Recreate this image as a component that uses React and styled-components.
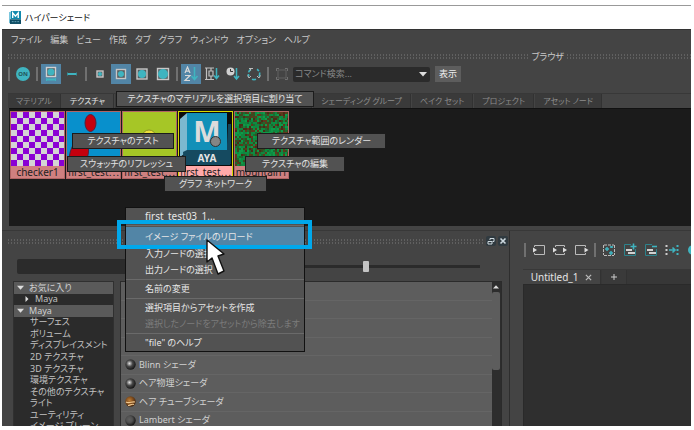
import React from "react";
import styled, { createGlobalStyle, css } from "styled-components";

const GlobalStyle = createGlobalStyle`
  * { box-sizing: border-box; }
  html, body { margin: 0; padding: 0; background: #fff; }
  body, button, input {
    font-family: "Noto Sans", "Noto Sans CJK JP", sans-serif;
    font-size: 9px;
    line-height: 12px;
    font-feature-settings: "palt";
  }
  button { padding: 0; border: 0; background: none; color: inherit; white-space: nowrap; }
  ul { list-style: none; margin: 0; padding: 0; }
  svg { display: block; }
`;

const teal = "#3fb4c0";
const blue = "#5285a6";

const Page = styled.div`
  height: 100vh;
  padding: 5px 3px 4px 2px;
`;

const Window = styled.div`
  position: relative;
  height: 100%;
  display: flex;
  flex-direction: column;
  overflow: hidden;
  background: #444;
  color: #c8c8c8;
  border-top: 1px solid #999;
`;

const TitleBar = styled.header`
  flex: none;
  height: 23px;
  display: flex;
  align-items: center;
  gap: 4px;
  padding-left: 7px;
  background: #fff;
  color: #111;
`;

const MenuBar = styled.nav`
  flex: none;
  height: 21px;
  display: flex;
  align-items: center;
  gap: 8px;
  padding-left: 9px;
  border-top: 1px solid #333;
`;

const GripRow = styled.div`
  flex: none;
  height: 13px;
  display: grid;
  grid-template-columns: 21fr auto 5fr;
  align-items: center;
  gap: 3px;
  padding-left: 6px;
`;

const Dots = styled.div`
  flex: 1;
  height: 5px;
  background:
    linear-gradient(#444, #444) 0 2px / 100% 1px no-repeat,
    repeating-linear-gradient(90deg, #606060 0 1px, #444 1px 3px);
`;

const Toolbar = styled.div`
  flex: none;
  height: 22px;
  display: flex;
  align-items: center;
  gap: 1px;
  padding-left: 4px;
`;

const Sep = styled.span`
  flex: none;
  width: 2px;
  height: 14px;
  margin: 0 2px;
  background: #707070;
`;

const ToolButton = styled.button`
  flex: none;
  width: 20px;
  height: 20px;
  display: grid;
  place-items: center;
  background: ${(p) => (p.$on ? blue : "transparent")};
`;

const SearchBox = styled.div`
  width: 137px;
  height: 15px;
  display: flex;
  align-items: center;
  padding: 0 3px 0 2px;
  margin-right: 4px;
  background: #2b2b2b;
  border-radius: 2px;
`;

const SearchInput = styled.input`
  flex: 1;
  min-width: 0;
  padding: 0;
  border: 0;
  background: transparent;
  color: #ccc;
  &::placeholder { color: #868686; }
`;

const PushButton = styled.button`
  width: 26px;
  height: 16px;
  background: #5d5d5d;
  color: #eee;
`;

const TabRow = styled.div`
  flex: none;
  display: flex;
  gap: 1px;
  margin-top: ${(p) => p.$top}px;
  margin-left: ${(p) => p.$left}px;
  border-top: 1px solid #383838;
  background: ${(p) => (p.$strip ? "#373737" : "transparent")};
`;

const Tab = styled.button`
  height: 14px;
  padding: 0 8px;
  display: flex;
  align-items: center;
  gap: 6px;
  font-size: ${(p) => (p.$latin ? 10 : 8)}px;
  background: ${(p) => (p.$on ? "#444" : "#3a3a3a")};
  color: ${(p) => (p.$on ? "#e4e4e4" : "#8c8c8c")};
  border-right: 1px solid #323232;
  ${(p) => p.$wide && css`width: 197px;`}
`;

const Gallery = styled.ul`
  flex: none;
  height: 118px;
  display: flex;
  gap: 1px;
  margin-left: 7px;
  padding: 2px 1px;
  background: #1b1b1b;
  border-top: 1px solid #111;
`;

const Swatch = styled.li`
  width: 55px;
  height: 68px;
  display: flex;
  flex-direction: column;
  border: 1px solid ${(p) => (p.$on ? "#d8d800" : "#b06464")};
  background: ${(p) => (p.$on ? "#ffa9a9" : "#cf8080")};
  color: #222;
`;

const SwatchLabel = styled.span`
  height: 12px;
  font-size: 10px;
  text-align: center;
  white-space: nowrap;
  overflow: hidden;
`;

const Checker = styled.div`
  height: 54px;
  background: conic-gradient(#d4d4d4 25%, #8a00d4 0 50%, #d4d4d4 0 75%, #8a00d4 0) 0 0 / 12px 12px;
`;

const Lower = styled.div`
  flex: 1;
  min-height: 0;
  display: grid;
  grid-template-columns: 14fr 5fr;
  margin-top: 4px;
  border-top: 1px solid #383838;
`;

const CreatePane = styled.section`
  min-width: 0;
  min-height: 0;
  display: flex;
  flex-direction: column;
  padding: 0 1px 0 6px;
  border-right: 1px solid #2e2e2e;
`;

const PaneHeader = styled.div`
  flex: none;
  height: 20px;
  display: flex;
  align-items: center;
  gap: 2px;
`;

const PaneButton = styled.button`
  width: 10px;
  height: 10px;
  display: grid;
  place-items: center;
  background: #303a40;
  border-radius: 2px;
`;

const FilterRow = styled.div`
  flex: none;
  display: flex;
  align-items: center;
  gap: 8px;
  height: 15px;
  margin: 8px 28px 7px 9px;
`;

const FilterInput = styled.input`
  flex: 1;
  min-width: 0;
  height: 15px;
  border: 0;
  border-radius: 2px;
  background: #2b2b2b;
  color: #ccc;
`;

const Slider = styled.input`
  appearance: none;
  flex: none;
  width: 50%;
  height: 12px;
  margin: 0;
  background: linear-gradient(#2b2b2b, #2b2b2b) 0 50% / 100% 3px no-repeat;
  &::-webkit-slider-thumb {
    appearance: none;
    width: 6px;
    height: 11px;
    border-radius: 1px;
    background: #c4c4c4;
  }
`;

const Columns = styled.div`
  flex: 1;
  min-height: 0;
  display: grid;
  grid-template-columns: 101px 1fr;
  gap: 6px;
  padding: 0 6px 0 5px;
`;

const Tree = styled.ul`
  min-height: 0;
  overflow: hidden;
  background: #2b2b2b;
  border: 1px solid #303030;
  border-bottom: 0;
  height: 100%;
`;

const TreeRows = styled.div`
  height: 150px;
  display: grid;
  grid-template-rows: repeat(13, 1fr);
`;

const TreeItem = styled.li`
  display: flex;
  align-items: center;
  gap: 5px;
  min-height: 0;
  padding-left: ${(p) => (p.$kind === "child" ? 10 : p.$kind === "head" ? 3 : 16)}px;
  background: ${(p) => (p.$kind === "head" ? "#5a5a5a" : "transparent")};
  color: ${(p) => (p.$kind === "head" ? "#d0d0d0" : "#c2c2c2")};
  white-space: nowrap;
`;

const ListFrame = styled.div`
  min-width: 0;
  min-height: 0;
  display: flex;
  overflow: hidden;
  background: #5d5d5d;
  border: solid #2b2b2b;
  border-width: 1px 1px 0 1px;
`;

const NodeRows = styled.ul`
  flex: 1;
  height: 148px;
  display: grid;
  grid-template-rows: repeat(8, 1fr);
`;

const NodeRow = styled.li`
  display: flex;
  align-items: center;
  gap: 3px;
  min-height: 0;
  padding-left: 4px;
  border-bottom: 1px solid #656565;
  color: #d0d0d0;
`;

const ScrollTrack = styled.div`
  width: 9px;
  display: flex;
  flex-direction: column;
  align-items: center;
  gap: 2px;
  padding-top: 2px;
  background: #2d2d2d;
`;

const ScrollThumb = styled.div`
  width: 8px;
  height: 78px;
  border-radius: 2px;
  background: #5d5d5d;
`;

const WorkPane = styled.section`
  min-width: 0;
  display: flex;
  flex-direction: column;
  overflow: hidden;
  padding: 8px 0 0 11px;
`;

const Canvas = styled.div`
  flex: 1;
  margin-left: 2px;
  background: #2f2f2f;
  border: solid #2a2a2a;
  border-width: 1px 0 0 1px;
`;

const RadialItem = styled.button`
  position: absolute;
  left: ${(p) => p.$x}px;
  top: ${(p) => p.$y}px;
  width: ${(p) => p.$w}px;
  height: 16px;
  background: #525252;
  border: 1px solid #1c1c1c;
  color: #e2e2e2;
`;

const RadialCenter = styled.span`
  position: absolute;
  left: 208px;
  top: 130px;
  width: 11px;
  height: 11px;
  border-radius: 50%;
  background: #858585;
  border: 1px solid #333;
`;

const ContextMenu = styled.div`
  position: absolute;
  left: 123px;
  top: 201px;
  width: 180px;
  display: flex;
  flex-direction: column;
  background: #525252;
  border: 1px solid #111;
`;

const MenuItem = styled.button`
  height: ${(p) => (p.$on ? 19 : 16)}px;
  padding-left: 19px;
  text-align: left;
  font-size: ${(p) => (p.$latin ? 10 : 9)}px;
  background: ${(p) => (p.$on ? blue : "transparent")};
  color: ${(p) => (p.disabled ? "#7c7c7c" : "#e6e6e6")};
`;

const MenuRule = styled.span`
  height: 1px;
  margin: 1px 0;
  background: #6a6a6a;
`;

const Highlight = styled.div`
  position: absolute;
  left: 115px;
  top: 214px;
  width: 195px;
  height: 29px;
  border: 4px solid #00a8ec;
`;

const Pointer = styled.svg`
  position: absolute;
  left: 203px;
  top: 233px;
`;

const Glyph = ({ children, size = 16 }) => (
  <svg width={size} height={size} viewBox={`0 0 ${size} ${size}`} fill="none" aria-hidden="true">
    {children}
  </svg>
);

const Preview = ({ box, r }) => (
  <Glyph>
    <rect x={8 - box / 2} y={8 - box / 2} width={box} height={box} fill="#565c5e" stroke="#c6c6c6" strokeWidth="1.400" />
    <circle cx="8" cy="8" r={r} fill={teal} />
  </Glyph>
);

const icons = {
  on: (
    <Glyph>
      <circle cx="8" cy="8" r="7" fill={teal} />
      <text x="8" y="10" textAnchor="middle" fontSize="6" fontWeight="700" fill="#22545a">ON</text>
    </Glyph>
  ),
  base: (
    <Glyph>
      <rect x="3.500" y="1.500" width="9" height="9" fill="#5a6265" stroke="#d0d0d0" strokeWidth="1.400" />
      <circle cx="8" cy="6" r="3.500" fill={teal} />
      <path d="M3.500 12v3M12.500 12v3" stroke={teal} />
      <path d="M4 13.500h8" stroke={teal} strokeWidth="2" />
    </Glyph>
  ),
  dash: (
    <Glyph>
      <path d="M3 8h10" stroke={teal} strokeWidth="2" />
      <path d="M3.500 6.500v3M12.500 6.500v3" stroke="#348e98" />
    </Glyph>
  ),
  az: (
    <Glyph>
      <path d="M2 7 4.500 1 7 7M3 5.200h3M2 9.500h5L2 14.500h5" stroke="#d8d8d8" strokeWidth="1.200" />
      <path d="M11.500 1v12M8.500 10l3 3.500 3-3.500" stroke={teal} strokeWidth="1.600" />
    </Glyph>
  ),
  type: (
    <Glyph>
      <path d="M1 2h9M1 13.500h9M2.500 2v11.500M5 5h4v5H5zM7 2v3M7 10v3.500" stroke="#c0c0c0" strokeWidth="1.200" />
      <path d="M12.500 2v10M10 9.500l2.500 3 2.500-3" stroke={teal} strokeWidth="1.500" />
    </Glyph>
  ),
  time: (
    <Glyph>
      <circle cx="5.500" cy="5.500" r="4" fill="#d0d0d0" />
      <path d="M5.500 3v2.500h2.500" stroke="#333" />
      <path d="M11.500 2v11M9 10l2.500 3 2.500-3" stroke={teal} strokeWidth="1.500" />
    </Glyph>
  ),
  cycle: (
    <Glyph>
      <path d="M5 3.200A5.500 5.500 0 0 0 3 10.500M6 13.200a5.500 5.500 0 0 0 4 0M13 10.500A5.500 5.500 0 0 0 11 3.200" stroke={teal} strokeWidth="1.600" strokeDasharray="4 1.500" />
      <path d="M3 2.500h4M4.500 2v2.500M1.500 9.500l1.500 2.500 2-2M14.500 9.500 13 12l-2-2" stroke="#bbb" />
    </Glyph>
  ),
  frame: (
    <Glyph>
      <path d="M4 4h8v8H4z" stroke="#606060" />
      <path d="M2.500 5V2.500H5M11 2.500h2.500V5M13.500 11v2.500H11M5 13.500H2.500V11" stroke="#707070" />
    </Glyph>
  ),
  input: (
    <Glyph>
      <path d="M3.500 5V3.500h10v9h-10V11" stroke="#bbb" />
      <path d="M2 5.500 6 8l-4 2.500z" fill="#ddd" />
    </Glyph>
  ),
  both: (
    <Glyph>
      <path d="M3.500 5V3.500h9V5M3.500 11v1.500h9V11" stroke="#bbb" />
      <path d="M1 5.500 5 8l-4 2.500zM11 5.500 15 8l-4 2.500z" fill="#ddd" />
    </Glyph>
  ),
  output: (
    <Glyph>
      <path d="M12.500 5V3.500h-10v9h10V11" stroke="#bbb" />
      <path d="M11.500 5.500 15.500 8l-4 2.500z" fill="#ddd" />
    </Glyph>
  ),
  graph: (
    <Glyph>
      <path d="M3 3h10M3 13.500h10M2.500 3v10M13.500 3v10" stroke="#bbb" strokeDasharray="3 1" />
      <path d="M4 7h4M6 5v4M9 5h3M10.500 4v2M8 11h4M10 9v4" stroke={teal} strokeWidth="1.500" />
    </Glyph>
  ),
  add: (
    <Glyph>
      <path d="M9 2.500H2.500v11h11V7" stroke="#2d838c" />
      <path d="M8.500 4.500h6M11.500 1.500v6" stroke={teal} strokeWidth="1.600" />
      <path d="M4 8h6M6 11h7" stroke="#d0d0d0" strokeWidth="2" />
    </Glyph>
  ),
  remove: (
    <Glyph>
      <path d="M9 2.500H2.500v11h11V7" stroke="#2d838c" />
      <path d="M9 4.500h5" stroke={teal} strokeWidth="1.600" />
      <path d="M4 8h6M6 11h7" stroke="#d0d0d0" strokeWidth="2" />
    </Glyph>
  ),
  arrange: (
    <Glyph>
      <path d="M5 8h6M8.500 5.500 11 8l-2.500 2.500" stroke={teal} strokeWidth="1.600" />
      <path d="M2.500 3v10" stroke="#ccc" strokeWidth="2" strokeDasharray="2 2" />
      <path d="M13.500 3v10" stroke={teal} strokeWidth="2" strokeDasharray="2 2" />
    </Glyph>
  ),
  dot: (
    <Glyph>
      <circle cx="8" cy="8" r="5" fill={teal} />
    </Glyph>
  ),
};

const Caret = ({ dir, size = 7 }) => (
  <svg width={size} height={size} viewBox="0 0 8 8" fill="#ddd" aria-hidden="true">
    <path d={dir === "down" ? "M0 2h8L4 6.500z" : dir === "up" ? "M0 6h8L4 1.500z" : "M2 0v8l4-4z"} />
  </svg>
);

const MayaIcon = () => (
  <svg width="12" height="13" viewBox="0 0 13 14" aria-hidden="true">
    <path d="M0 1h2v12H0z" fill="#7cc7de" />
    <path d="M2 0h11v9H2z" fill="#1189ad" />
    <path d="M1 9h12v5H1z" fill="#0c4b63" />
    <path d="M4 7.500V2l3 3.500L10 2v5.500" stroke="#fff" strokeWidth="1.500" fill="none" />
    <path d="M3 11.500h8" stroke="#6ba5b8" strokeDasharray="2 1" />
  </svg>
);

const MayaSwatch = () => (
  <svg width="53" height="54" viewBox="0 0 53 54">
    <rect width="53" height="54" fill="#0c0c0c" />
    <path d="M1 7 8 1v39l-7 5z" fill="#7cb8cf" />
    <path d="M49 12h3v40h-5z" fill="#12465c" />
    <rect x="8" y="1" width="40" height="38" fill="#1290b8" />
    <path d="M4 40 8 38h43v15H5z" fill="#154a60" />
    <text x="28" y="30" textAnchor="middle" fontFamily="Noto Sans" fontSize="29" fontWeight="700" fill="#dcdcdc">M</text>
    <text x="28" y="50" textAnchor="middle" fontFamily="Noto Sans" fontSize="10" fontWeight="700" fill="#e4e4e4">AYA</text>
  </svg>
);

const RedDots = () => (
  <svg width="53" height="54" viewBox="0 0 53 54">
    <rect width="53" height="54" fill="#0890cc" />
    <ellipse cx="23.500" cy="11" rx="5.500" ry="8.500" fill="#c4000e" stroke="#5a2038" />
    <ellipse cx="12" cy="42" rx="9" ry="15" fill="#c4000e" stroke="#5a2038" transform="rotate(15 12 42)" />
  </svg>
);

const YellowDot = () => (
  <svg width="53" height="54" viewBox="0 0 53 54">
    <rect width="53" height="54" fill="#a6c626" />
    <circle cx="26" cy="25" r="7" fill="#ece03c" stroke="#8c9424" />
  </svg>
);

const mountainColors = ["#0c8c42", "#0f9a48", "#1c6a30", "#3b4a20", "#5e3a1c", "#12843e", "#4a2c18"];
const mountainCells = [];
for (let y = 0; y < 27; y += 1) {
  for (let x = 0; x < 27; x += 1) {
    const n = Math.abs(Math.sin(x * 12.9898 + y * 78.233) * 43758.5453);
    mountainCells.push({ x: x * 2, y: y * 2, fill: mountainColors[Math.floor((n % 1) * 7)] });
  }
}

const Mountain = () => (
  <svg width="53" height="54" viewBox="0 0 53 54" shapeRendering="crispEdges">
    {mountainCells.map((c) => (
      <rect key={`${c.x}-${c.y}`} x={c.x} y={c.y} width="2" height="2" fill={c.fill} />
    ))}
  </svg>
);

const Ball = ({ tone }) => (
  <svg width="11" height="11" viewBox="0 0 11 11" aria-hidden="true">
    <defs>
      <radialGradient id={`ball-${tone}`} cx="0.400" cy="0.400" r="0.600">
        <stop offset="0" stopColor={tone === "hair" ? "#c08038" : tone === "matte" ? "#606060" : "#e0e0e0"} />
        <stop offset="0.500" stopColor={tone === "hair" ? "#8a5420" : tone === "matte" ? "#505050" : "#484848"} />
        <stop offset="1" stopColor={tone === "hair" ? "#4a2a10" : "#181818"} />
      </radialGradient>
    </defs>
    <circle cx="5.500" cy="5.500" r="5.200" fill={`url(#ball-${tone})`} />
    {tone === "hair" && <path d="M1 6c3 2 6-1 9 0M3 9.500c2 0 4-2 6-1" stroke="#f0c890" strokeWidth="1.200" fill="none" />}
  </svg>
);

const menus = ["ファイル", "編集", "ビュー", "作成", "タブ", "グラフ", "ウィンドウ", "オプション", "ヘルプ"];

const tools = [
  "|", ["オン", icons.on], "|", ["アイコンと名前", icons.base, true], ["名前のみ", icons.dash], "|",
  ["極小", <Preview box={6} r={2} />], ["小", <Preview box={9} r={3} />, true],
  ["中", <Preview box={10} r={4} />], ["大", <Preview box={11} r={5} />], "|",
  ["名前順", icons.az, true], ["タイプ順", icons.type], ["時間順", icons.time], ["逆順", icons.cycle], "|",
  ["フレーム", icons.frame],
];

const graphTools = [
  "|", ["入力", icons.input], ["入出力", icons.both], ["出力", icons.output], "|",
  ["グラフ化", icons.graph], ["追加", icons.add], ["除去", icons.remove], ["整列", icons.arrange], ["表示", icons.dot],
];

const swatches = [
  ["checker1", <Checker />], ["first_test⋯", <RedDots />], ["first_test⋯", <YellowDot />],
  ["first_test⋯", <MayaSwatch />, true], ["mountain1", <Mountain />],
];

const tree = [
  ["お気に入り", "head"], ["Maya", "child"], ["Maya", "head"], ["サーフェス"], ["ボリューム"],
  ["ディスプレイスメント"], ["2D テクスチャ"], ["3D テクスチャ"], ["環境テクスチャ"],
  ["その他のテクスチャ"], ["ライト"], ["ユーティリティ"], ["イメージ プレーン"],
];

const nodes = [
  [], [], [], ["", "gloss"], ["Blinn シェーダ", "gloss"], ["ヘア物理シェーダ", "gloss"],
  ["ヘア チューブシェーダ", "hair"], ["Lambert シェーダ", "matte"],
];

const radial = [
  ["テクスチャのマテリアルを選択項目に割り当て", 114, 85, 198],
  ["テクスチャのテスト", 70, 127, 102],
  ["スウォッチのリフレッシュ", 65, 150, 119],
  ["グラフ ネットワーク", 162, 170, 103],
  ["テクスチャ範囲のレンダー", 255, 127, 129],
  ["テクスチャの編集", 243, 150, 100],
];

const ToolSet = ({ items }) =>
  items.map((t, i) =>
    t === "|" ? <Sep key={i} /> : (
      <ToolButton key={i} aria-label={t[0]} $on={t[2]}>{t[1]}</ToolButton>
    )
  );

const GraphToolbar = styled(Toolbar)`
  padding-left: 1px;
`;

export default function App() {
  return (
    <Page>
      <GlobalStyle />
      <Window>
        <TitleBar><MayaIcon />ハイパーシェード</TitleBar>
        <MenuBar>{menus.map((m) => <button key={m}>{m}</button>)}</MenuBar>
        <GripRow><Dots /><span>ブラウザ</span><Dots /></GripRow>
        <Toolbar>
          <ToolSet items={tools} />
          <SearchBox>
            <SearchInput aria-label="コマンド検索" placeholder="コマンド検索..." />
            <button aria-label="検索履歴"><Caret dir="down" size={8} /></button>
          </SearchBox>
          <PushButton>表示</PushButton>
        </Toolbar>
        <TabRow $top={8} $left={6}>
          <Tab>マテリアル</Tab>
          <Tab $on>テクスチャ</Tab>
          <Tab $wide aria-label="ライト" />
          <Tab>シェーディング グループ</Tab>
          <Tab>ベイク セット</Tab>
          <Tab>プロジェクト</Tab>
          <Tab>アセット ノード</Tab>
        </TabRow>
        <Gallery>
          {swatches.map(([name, art, on], i) => (
            <Swatch key={i} $on={on}>{art}<SwatchLabel>{name}</SwatchLabel></Swatch>
          ))}
        </Gallery>
        <Lower>
          <CreatePane>
            <PaneHeader>
              <Dots />
              <PaneButton aria-label="切り離す">
                <svg width="8" height="8" viewBox="0 0 8 8" fill="none" stroke="#cdd8de"><path d="M3 3V1.500h4v3H5.500M1 4.500h4v2.500H1z" /></svg>
              </PaneButton>
              <PaneButton aria-label="閉じる">
                <svg width="8" height="8" viewBox="0 0 8 8" stroke="#cdd8de" strokeWidth="1.600"><path d="m1.500 1.500 5 5m0-5-5 5" /></svg>
              </PaneButton>
            </PaneHeader>
            <FilterRow>
              <FilterInput aria-label="フィルタ" />
              <Slider type="range" min="0" max="100" defaultValue="51" aria-label="サイズ" />
            </FilterRow>
            <Columns>
              <Tree>
                <TreeRows>
                  {tree.map(([name, kind], i) => (
                    <TreeItem key={i} $kind={kind}>
                      {kind && <Caret dir={kind === "head" ? "down" : "right"} size={kind === "head" ? 7 : 6} />}
                      {name}
                    </TreeItem>
                  ))}
                </TreeRows>
              </Tree>
              <ListFrame>
                <NodeRows>
                  {nodes.map(([name, tone], i) => (
                    <NodeRow key={i}>{tone && <Ball tone={tone} />}{name}</NodeRow>
                  ))}
                </NodeRows>
                <ScrollTrack><Caret dir="up" size={6} /><ScrollThumb /></ScrollTrack>
              </ListFrame>
            </Columns>
          </CreatePane>
          <WorkPane>
            <GraphToolbar><ToolSet items={graphTools} /></GraphToolbar>
            <TabRow $top={8} $left={2} $strip>
              <Tab $on $latin>
                Untitled_1
                <svg width="7" height="7" viewBox="0 0 8 8" stroke="#bbb" strokeWidth="1.400" aria-hidden="true"><path d="m1 1 6 6m0-6-6 6" /></svg>
              </Tab>
              <Tab $latin aria-label="新規タブ">
                <svg width="8" height="8" viewBox="0 0 8 8" stroke="#ccc" aria-hidden="true"><path d="M1 4h6M4 1v6" /></svg>
              </Tab>
            </TabRow>
            <Canvas />
          </WorkPane>
        </Lower>
        {radial.map(([label, x, y, w]) => (
          <RadialItem key={label} $x={x} $y={y} $w={w}>{label}</RadialItem>
        ))}
        <RadialCenter />
        <ContextMenu>
          <MenuItem $latin>first_test03_1...</MenuItem>
          <MenuRule />
          <MenuItem $on>イメージ ファイルのリロード</MenuItem>
          <MenuItem>入力ノードの選択</MenuItem>
          <MenuItem>出力ノードの選択</MenuItem>
          <MenuRule />
          <MenuItem>名前の変更</MenuItem>
          <MenuRule />
          <MenuItem>選択項目からアセットを作成</MenuItem>
          <MenuItem disabled>選択したノードをアセットから除去します</MenuItem>
          <MenuRule />
          <MenuItem>"file" のヘルプ</MenuItem>
        </ContextMenu>
        <Highlight />
        <Pointer width="22" height="40" viewBox="0 0 22 40" aria-hidden="true">
          <path d="M2 1v22l5-4 6 16 6-3-6-15 6-2z" fill="#fff" stroke="#111" strokeWidth="1.400" strokeLinejoin="round" />
        </Pointer>
      </Window>
    </Page>
  );
}
